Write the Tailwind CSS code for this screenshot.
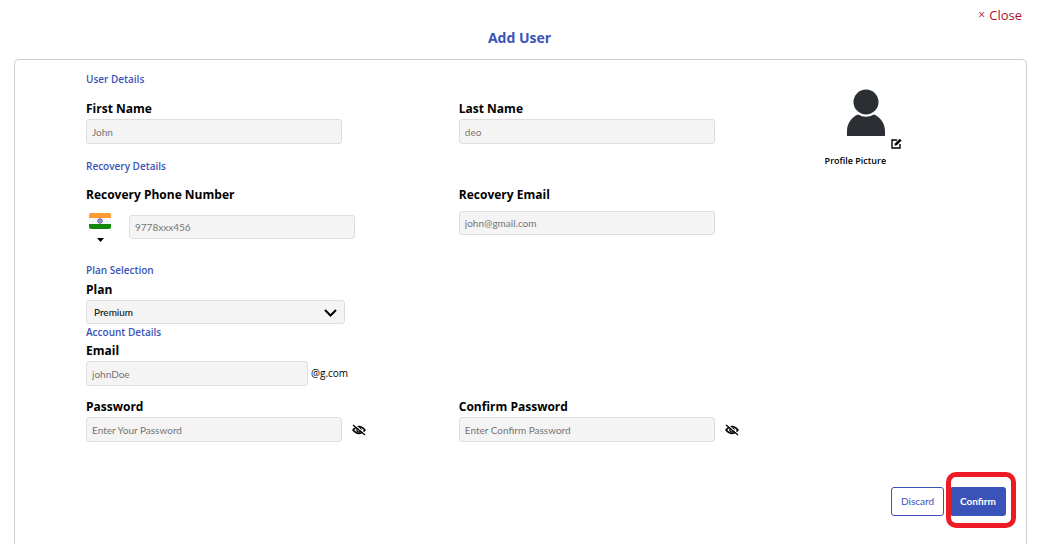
<!DOCTYPE html>
<html lang="en">
<head>
    <meta charset="UTF-8">
    <meta name="viewport" content="width=device-width, initial-scale=1.0">
    <title>Add User</title>
    <!-- Tailwind CSS -->
    <script src="https://cdn.jsdelivr.net/npm/@tailwindcss/browser@4"></script>
</head>
<body class="flex min-h-screen flex-col bg-white font-['Open_Sans','Noto_Sans',sans-serif] text-black">
    <!-- Header -->
    <header class="px-4 pt-[5px]">
        <div class="flex justify-end pr-px">
            <button type="button" class="flex items-center gap-1 text-[13px] leading-[20px] text-[#b01030]"><span class="text-[12px]">×</span>Close</button>
        </div>
        <h1 class="mt-px text-center text-[14px] leading-[24px] font-bold text-[#3a53b8]">Add User</h1>
    </header>

    <!-- User form -->
    <form class="mx-3 mt-[9px] ml-[14px] flex-1 rounded-t-[5px] border border-b-0 border-[#d0d0d0] pt-[11px] pr-2 pl-[71px]">
        <div class="flex">
            <div class="flex-4">
                <h2 class="text-[10px] leading-[16px] font-semibold text-[#3a53b8]">User Details</h2>
                <div class="mt-3 grid grid-cols-2">
                    <div>
                        <label for="firstName" class="block text-[12px] leading-[20px] font-bold">First Name</label>
                        <input type="text" id="firstName" placeholder="John" class="block h-[25px] w-64 rounded-[3px] border border-[#dedede] bg-[#f4f4f4] px-[5px] font-[Lato,sans-serif] text-[10px] placeholder:text-[#757575]">
                    </div>
                    <div>
                        <label for="lastName" class="block text-[12px] leading-[20px] font-bold">Last Name</label>
                        <input type="text" id="lastName" placeholder="deo" class="block h-[25px] w-64 rounded-[3px] border border-[#dedede] bg-[#f4f4f4] px-[5px] font-[Lato,sans-serif] text-[10px] placeholder:text-[#757575]">
                    </div>
                </div>

                <h2 class="mt-[14px] text-[10px] leading-[16px] font-semibold text-[#3a53b8]">Recovery Details</h2>
                <div class="mt-[11px] grid grid-cols-2">
                    <div>
                        <label for="phone" class="block text-[12px] leading-[20px] font-bold">Recovery Phone Number</label>
                        <div class="mt-2 flex">
                            <button type="button" aria-label="Country code" class="ml-[3px] flex h-[30px] w-[22px] flex-col items-center gap-[9px]">
                                <svg class="h-[16px] w-[22px]" viewBox="0 0 22 16">
                                    <rect width="22" height="16" rx="2" fill="#f7f7f7"/>
                                    <path d="M2 0h18a2 2 0 0 1 2 2v3H0V2a2 2 0 0 1 2-2z" fill="#ff9a30"/>
                                    <path d="M0 11h22v3a2 2 0 0 1-2 2H2a2 2 0 0 1-2-2z" fill="#138808"/>
                                    <circle cx="11" cy="8" r="2.2" fill="#d8d8f0" stroke="#3b3b96" stroke-width="1"/>
                                    <circle cx="11" cy="8" r=".8" fill="#3b3b96"/>
                                </svg>
                                <svg class="h-[4px] w-[7px]" viewBox="0 0 7 4"><path d="M0 0h7L3.500 4z"/></svg>
                            </button>
                            <input type="tel" id="phone" placeholder="9778xxx456" class="mt-[2px] ml-[18px] block h-[24px] w-[226px] rounded-[3px] border border-[#dedede] bg-[#f4f4f4] px-[5px] font-[Lato,sans-serif] text-[10px] placeholder:text-[#757575]">
                        </div>
                    </div>
                    <div>
                        <label for="recoveryEmail" class="block text-[12px] leading-[20px] font-bold">Recovery Email</label>
                        <input type="email" id="recoveryEmail" placeholder="john@gmail.com" class="mt-[6px] block h-[24px] w-64 rounded-[3px] border border-[#dedede] bg-[#f4f4f4] px-[5px] font-[Lato,sans-serif] text-[10px] placeholder:text-[#757575]">
                    </div>
                </div>

                <h2 class="mt-[19px] text-[10px] leading-[16px] font-semibold text-[#3a53b8]">Plan Selection</h2>
                <label for="plan" class="mt-[2px] block text-[12px] leading-[20px] font-bold">Plan</label>
                <div class="relative w-[259px]">
                    <select id="plan" class="block h-[24px] w-full appearance-none rounded-[3px] border border-[#dedede] bg-[#f4f4f4] px-[7px] font-[Lato,sans-serif] text-[10px]">
                        <option>Premium</option>
                    </select>
                    <svg class="pointer-events-none absolute top-[9px] right-2 h-[8px] w-[13px]" viewBox="0 0 13 8" fill="none" stroke="#000" stroke-width="2"><path d="M1 1l5.500 5.500L12 1"/></svg>
                </div>

                <h2 class="text-[10px] leading-[16px] font-semibold text-[#3a53b8]">Account Details</h2>
                <label for="email" class="mt-px block text-[12px] leading-[20px] font-bold">Email</label>
                <div class="flex items-center gap-[3px]">
                    <input type="text" id="email" placeholder="johnDoe" class="block h-[25px] w-[222px] rounded-[3px] border border-[#dedede] bg-[#f4f4f4] px-[5px] font-[Lato,sans-serif] text-[10px] placeholder:text-[#757575]">
                    <span class="text-[10px]">@g.com</span>
                </div>

                <div class="mt-[11px] grid grid-cols-2">
                    <div>
                        <label for="password" class="block text-[12px] leading-[20px] font-bold">Password</label>
                        <div class="flex items-center gap-[10px]">
                            <input type="password" id="password" placeholder="Enter Your Password" class="block h-[25px] w-64 rounded-[3px] border border-[#dedede] bg-[#f4f4f4] px-[5px] font-[Lato,sans-serif] text-[10px] placeholder:text-[#757575]">
                            <button type="button" aria-label="Show password">
                                <svg class="h-[12px] w-[14px]" viewBox="0 0 14 12" fill="none" stroke="#000"><path d="M1 6Q7-1 13 6Q7 13 1 6z" stroke-width="1.500"/><circle cx="7" cy="6" r="2.100" stroke-width="1.300"/><path d="M2.200.4L13.400 10" stroke="#fff" stroke-width="1.200"/><path d="M1 1l12 10" stroke-width="1.200"/></svg>
                            </button>
                        </div>
                    </div>
                    <div>
                        <label for="confirmPassword" class="block text-[12px] leading-[20px] font-bold">Confirm Password</label>
                        <div class="flex items-center gap-[10px]">
                            <input type="password" id="confirmPassword" placeholder="Enter Confirm Password" class="block h-[25px] w-64 rounded-[3px] border border-[#dedede] bg-[#f4f4f4] px-[5px] font-[Lato,sans-serif] text-[10px] placeholder:text-[#757575]">
                            <button type="button" aria-label="Show confirm password">
                                <svg class="h-[12px] w-[14px]" viewBox="0 0 14 12" fill="none" stroke="#000"><path d="M1 6Q7-1 13 6Q7 13 1 6z" stroke-width="1.500"/><circle cx="7" cy="6" r="2.100" stroke-width="1.300"/><path d="M2.200.4L13.400 10" stroke="#fff" stroke-width="1.200"/><path d="M1 1l12 10" stroke-width="1.200"/></svg>
                            </button>
                        </div>
                    </div>
                </div>
            </div>

            <!-- Profile picture -->
            <div class="flex-1 pt-[18px]">
                <div class="flex items-end gap-[6px] pl-[15px]">
                    <svg class="mb-3 h-[48px] w-[38px]" viewBox="0 0 38 48" fill="#2b2e33"><circle cx="19" cy="13" r="12.500"/><path d="M0 47V42C0 34 5 28 11 25.500Q19 30 27 25.500C33 28 38 34 38 42V47z"/></svg>
                    <button type="button" aria-label="Edit profile picture">
                        <svg class="h-[11px] w-[11px]" viewBox="0 0 11 11" fill="none" stroke="#000"><path d="M6 2H1v8h8V6" stroke-width="1.400"/><path d="M3.800 7.300L4.200 5.400 8.700.9 10.300 2.500 5.800 7z" fill="#000" stroke-width=".5"/></svg>
                    </button>
                </div>
                <p class="mt-[2px] -ml-[7px] text-[9px] leading-[20px] font-semibold">Profile Picture</p>
            </div>
        </div>

        <!-- Actions -->
        <div class="mt-[45px] mr-3 flex justify-end gap-[6px]">
            <button type="button" class="h-[29px] w-[53px] rounded-[3px] border border-[#3a53b8] font-[Lato,sans-serif] text-[10px] text-[#3a53b8]">Discard</button>
            <div class="relative">
                <button type="submit" class="h-[29px] w-[56px] rounded-[3px] bg-[#3a53b8] font-[Lato,sans-serif] text-[10px] font-bold text-white">Confirm</button>
                <div class="pointer-events-none absolute -top-[15px] -right-[10px] h-[56px] w-[70px] rounded-[10px] border-5 border-[#ed1c24]"></div>
            </div>
        </div>
    </form>
</body>
</html>
